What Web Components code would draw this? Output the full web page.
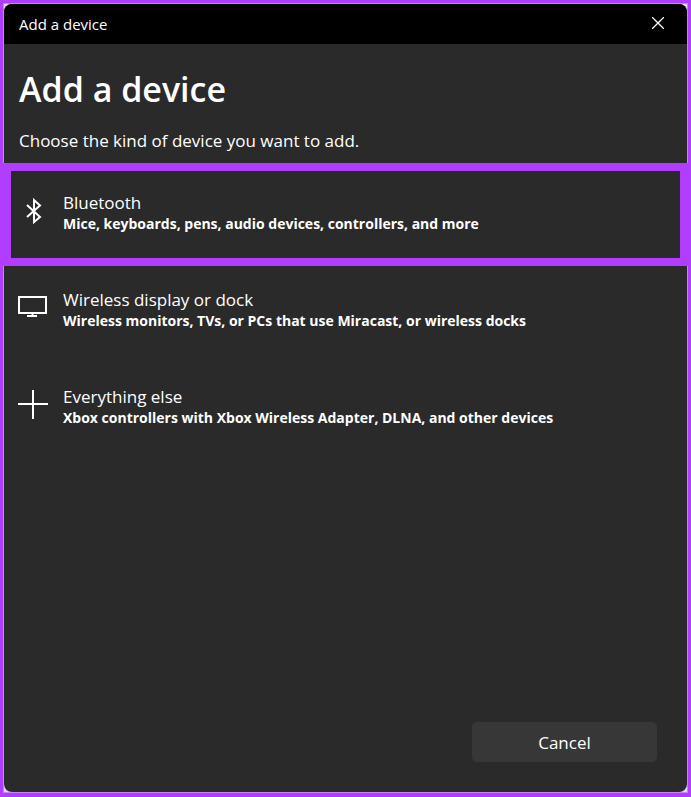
<!DOCTYPE html>
<html lang="en">
<head>
<meta charset="utf-8">
<meta name="viewport" content="width=device-width, initial-scale=1">
<title>Add a device</title>
<style>
  html {
    height: 100%;
  }

  body {
    display: flex;
    box-sizing: border-box;
    min-height: 100%;
    margin: 0;
    padding: 3px 3px 4px;
    background-color: #b13dff;
    font-family: "Segoe UI", "Open Sans", "Noto Sans", sans-serif;
    color: #fff;
  }
</style>
</head>
<body>
<device-dialog></device-dialog>

<script>
// Define templates.
const dialogTemplate = document.createElement('template')
dialogTemplate.innerHTML = `
  <style>
  :host {
    display: flex;
    flex: 1;
    min-width: 0;
    border: 1px solid #c783f5;
    background-color: #e4d3ee;
  }
  .dialog {
    display: flex;
    flex: 1;
    flex-direction: column;
    min-width: 0;
    border-radius: 8px;
    background-color: #2a2a2a;
  }
  header {
    padding: 0 15px;
  }
  h1 {
    margin: 21px 0 0;
    font-size: 34px;
    font-weight: 600;
    line-height: 48px;
  }
  p {
    margin: 16px 0 18px;
    font-size: 17px;
    line-height: 24px;
  }
  .options {
    display: flex;
    flex-direction: column;
    gap: 10px;
    padding: 0 7px;
  }
  footer {
    display: flex;
    justify-content: flex-end;
    margin-top: auto;
    padding: 30px;
  }
  </style>

  <div class="dialog">
    <title-bar>Add a device</title-bar>
    <header>
      <h1>Add a device</h1>
      <p>Choose the kind of device you want to add.</p>
    </header>
    <div class="options">
      <device-option highlighted>
        <svg slot="icon" width="30" height="30" viewBox="0 0 30 30" fill="none" stroke="#fff" stroke-width="2">
          <path d="M9 9 L22 21 L16 26 V4 L22 9.500 L9 21"/>
        </svg>
        Bluetooth
        <span slot="description">Mice, keyboards, pens, audio devices, controllers, and more</span>
      </device-option>
      <device-option>
        <svg slot="icon" width="30" height="30" viewBox="0 0 30 30" fill="none" stroke="#fff" stroke-width="2">
          <path d="M1 4 H28 V20 H1 Z M14.500 20 V23 M9 23 H19"/>
        </svg>
        Wireless display or dock
        <span slot="description">Wireless monitors, TVs, or PCs that use Miracast, or wireless docks</span>
      </device-option>
      <device-option>
        <svg slot="icon" width="30" height="30" viewBox="0 0 30 30" fill="none" stroke="#fff" stroke-width="2">
          <path d="M0 14 H30 M15 0 V29"/>
        </svg>
        Everything else
        <span slot="description">Xbox controllers with Xbox Wireless Adapter, DLNA, and other devices</span>
      </device-option>
    </div>
    <footer>
      <dialog-button>Cancel</dialog-button>
    </footer>
  </div>
`

const titleBarTemplate = document.createElement('template')
titleBarTemplate.innerHTML = `
  <style>
  :host {
    display: flex;
    align-items: center;
    justify-content: space-between;
    height: 40px;
    padding-left: 15px;
    border-radius: 8px 8px 0 0;
    background-color: #000;
    font-size: 15px;
    line-height: 20px;
  }
  button {
    display: flex;
    align-items: center;
    justify-content: center;
    width: 58px;
    height: 40px;
    margin: 0;
    padding: 0 0 2px;
    border: 0;
    background: none;
    color: inherit;
  }
  </style>

  <span><slot></slot></span>
  <button type="button" aria-label="Close">
    <svg width="12" height="12" viewBox="0 0 12 12" fill="none" stroke="currentColor" stroke-width="1.3">
      <path d="M0 0 L12 12 M12 0 L0 12"/>
    </svg>
  </button>
`

const optionTemplate = document.createElement('template')
optionTemplate.innerHTML = `
  <style>
  :host {
    display: block;
  }
  :host([highlighted]) {
    outline: 8px solid #b13dff;
  }
  button {
    display: flex;
    gap: 15px;
    box-sizing: border-box;
    width: 100%;
    min-height: 87px;
    margin: 0;
    padding: 21px 7px;
    border: 0;
    background: none;
    color: inherit;
    font: inherit;
    text-align: left;
  }
  .icon {
    flex: none;
    width: 30px;
    padding-top: 4px;
  }
  .text {
    display: flex;
    flex-direction: column;
    font-size: 17px;
    line-height: 21px;
  }
  .description {
    font-size: 14px;
    font-weight: 700;
  }
  </style>

  <button type="button">
    <span class="icon"><slot name="icon"></slot></span>
    <span class="text">
      <span><slot></slot></span>
      <span class="description"><slot name="description"></slot></span>
    </span>
  </button>
`

const buttonTemplate = document.createElement('template')
buttonTemplate.innerHTML = `
  <style>
  :host {
    display: block;
  }
  button {
    min-width: 185px;
    height: 40px;
    margin: 0;
    padding: 1px 16px 0;
    border: 0;
    border-radius: 5px;
    background-color: #373737;
    color: inherit;
    font: inherit;
    font-size: 17px;
    line-height: 24px;
  }
  </style>

  <button type="button"><slot></slot></button>
`

/**
 * Base class which clones a template into an open shadow root.
 */
class TemplateElement extends HTMLElement {
  /**
   * Creates an instance of the current type.
   *
   * @param {HTMLTemplateElement} template - The template to clone.
   */
  constructor (template) {
    super()

    this.attachShadow({ mode: 'open' })
      .appendChild(template.content.cloneNode(true))
  }
}

customElements.define('title-bar',

  /**
   * Represents the bar with the title and the close button.
   */
  class extends TemplateElement {
    /**
     * Creates an instance of the current type.
     */
    constructor () {
      super(titleBarTemplate)
    }

    /**
     * Called after the element is inserted into the DOM.
     */
    connectedCallback () {
      this.shadowRoot.querySelector('button').addEventListener('click', () => {
        this.dispatchEvent(new CustomEvent('dialog-close', { bubbles: true }))
      })
    }
  }
)

customElements.define('device-option',

  /**
   * Represents one kind of device that can be added.
   */
  class extends TemplateElement {
    /**
     * Creates an instance of the current type.
     */
    constructor () {
      super(optionTemplate)
    }

    /**
     * Called after the element is inserted into the DOM.
     */
    connectedCallback () {
      this.shadowRoot.querySelector('button').addEventListener('click', () => {
        this.dispatchEvent(new CustomEvent('option-select', { bubbles: true }))
      })
    }
  }
)

customElements.define('dialog-button',

  /**
   * Represents a button in the footer of the dialog.
   */
  class extends TemplateElement {
    /**
     * Creates an instance of the current type.
     */
    constructor () {
      super(buttonTemplate)
    }
  }
)

customElements.define('device-dialog',

  /**
   * Represents the dialog for adding a device.
   */
  class extends TemplateElement {
    /**
     * Creates an instance of the current type.
     */
    constructor () {
      super(dialogTemplate)
    }

    /**
     * Called after the element is inserted into the DOM.
     */
    connectedCallback () {
      const options = this.shadowRoot.querySelectorAll('device-option')

      this.shadowRoot.addEventListener('option-select', (event) => {
        options.forEach((option) => {
          option.toggleAttribute('highlighted', option === event.target)
        })
      })
      this.shadowRoot.addEventListener('dialog-close', () => this.remove())
      this.shadowRoot.querySelector('dialog-button')
        .addEventListener('click', () => this.remove())
    }
  }
)
</script>
</body>
</html>
